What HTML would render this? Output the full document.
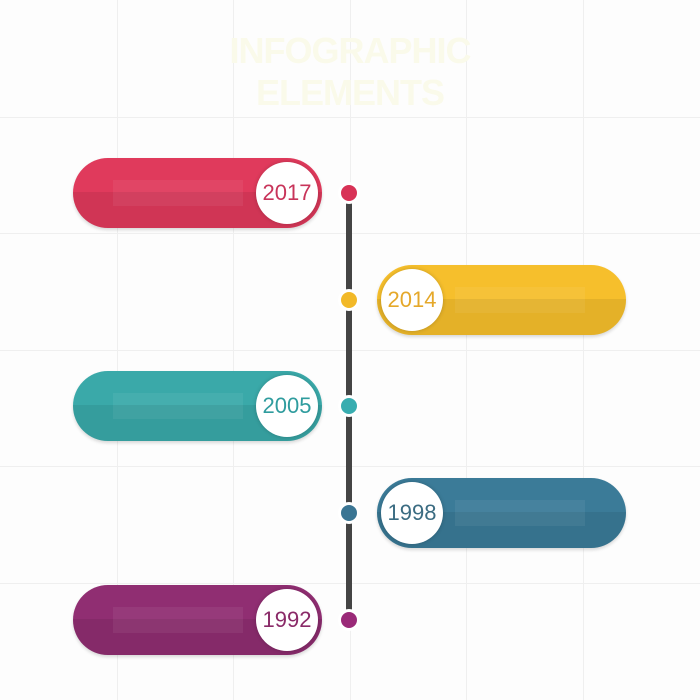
<!DOCTYPE html>
<html><head><style>
html,body{margin:0;padding:0}
body{width:700px;height:700px;position:relative;overflow:hidden;font-family:"Liberation Sans",sans-serif;
background:#fdfdfd;
background-image:linear-gradient(#efefef,#efefef),linear-gradient(#efefef,#efefef),linear-gradient(#efefef,#efefef),linear-gradient(#efefef,#efefef),linear-gradient(#efefef,#efefef),
linear-gradient(#efefef,#efefef),linear-gradient(#efefef,#efefef),linear-gradient(#efefef,#efefef),linear-gradient(#efefef,#efefef),linear-gradient(#efefef,#efefef);
background-size:1px 700px,1px 700px,1px 700px,1px 700px,1px 700px,700px 1px,700px 1px,700px 1px,700px 1px,700px 1px;
background-position:117px 0,233px 0,350px 0,466px 0,583px 0,0 117px,0 233px,0 350px,0 466px,0 583px;
background-repeat:no-repeat}
.title{position:absolute;left:0;width:700px;text-align:center;top:30px;font-weight:bold;font-size:36px;line-height:42px;color:#fafaea;letter-spacing:-1px}
.pill{position:absolute;width:249px;height:70px;border-radius:35px;box-shadow:0 2px 3px rgba(0,0,0,.15)}
.pill .lo{position:absolute;left:0;right:0;bottom:0;height:36px;border-radius:0 0 35px 35px;background:rgba(0,0,0,.07)}
.pill .c{position:absolute;top:4px;width:62px;height:62px;border-radius:50%;background:#fff;text-align:center;line-height:62px;font-size:22px;box-shadow:0 0 4px rgba(0,0,0,.2)}
.pill .t{position:absolute;top:22px;height:26px;background:rgba(255,255,255,.06)}
.line{position:absolute;left:346px;top:200px;width:6px;height:415px;background:#444}
.dot{position:absolute;left:338px;width:16px;height:16px;border-radius:50%;border:3px solid #fff}
</style></head><body>
<div class="title">INFOGRAPHIC<br>ELEMENTS</div>
<div class="line"></div>

<div class="pill" style="left:73px;top:158px;background:#e03a5c"><div class="lo"></div><div class="t" style="left:40px;width:130px"></div><div class="c" style="left:183px;color:#c8345a">2017</div></div>
<div class="pill" style="left:377px;top:265px;background:#f6bf2c"><div class="lo"></div><div class="t" style="left:78px;width:130px"></div><div class="c" style="left:4px;color:#e5a82a">2014</div></div>
<div class="pill" style="left:73px;top:371px;background:#3aa9a9"><div class="lo"></div><div class="t" style="left:40px;width:130px"></div><div class="c" style="left:183px;color:#2f9c9e">2005</div></div>
<div class="pill" style="left:377px;top:478px;background:#3b7b98"><div class="lo"></div><div class="t" style="left:78px;width:130px"></div><div class="c" style="left:4px;color:#3b6c82">1998</div></div>
<div class="pill" style="left:73px;top:585px;background:#902e72"><div class="lo"></div><div class="t" style="left:40px;width:130px"></div><div class="c" style="left:183px;color:#8a2a68">1992</div></div>

<div class="dot" style="top:182px;background:#d83256"></div>
<div class="dot" style="top:289px;background:#f2b928"></div>
<div class="dot" style="top:395px;background:#38adb0"></div>
<div class="dot" style="top:502px;background:#3a7593"></div>
<div class="dot" style="top:609px;background:#9a2a78"></div>
</body></html>
